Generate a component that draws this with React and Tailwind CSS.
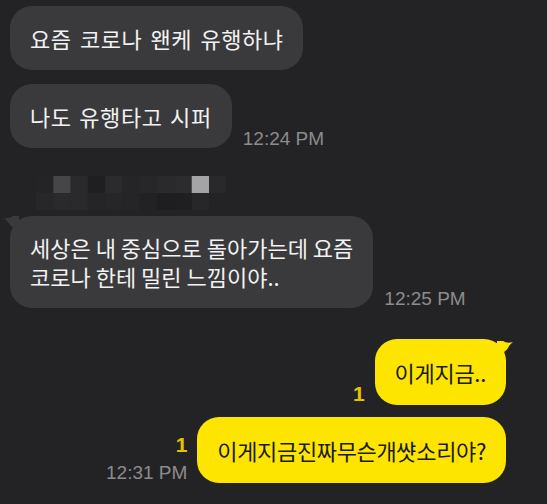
import React from 'react';

const font = { fontFamily: '"Noto Sans CJK KR", "Noto Sans", sans-serif' };

function Time({ children }) {
    return (
        <span className="text-[19px] leading-none text-[#8c8c8e] font-['Liberation_Sans',sans-serif] whitespace-nowrap">
            {children}
        </span>
    );
}

function Received({ children, time, tail, className = '', textClass = 'leading-[28px] py-[18px]' }) {
    return (
        <div className={`flex items-end gap-[11px] pl-[10px] ${className}`}>
            <div className="relative">
                {tail && (
                    <svg className="absolute -left-[7px] top-0" width="16" height="14" viewBox="0 0 16 14">
                        <path d="M0 2 Q6 3 10 0 L16 0 L16 14 Q8 12 5 6 Q3 3 0 2 Z" fill="#3a3a3c" />
                    </svg>
                )}
                <div className={`relative bg-[#3a3a3c] text-[#f2f2f2] text-[22px] rounded-[22px] px-[20px] ${textClass}`}>
                    {children}
                </div>
            </div>
            {time && <div className="-mb-[2px]"><Time>{time}</Time></div>}
        </div>
    );
}

function Sent({ children, time, tail, className = '', textClass = 'tracking-[0px]' }) {
    return (
        <div className={`flex items-end justify-end gap-[10px] pr-[41px] ${className}`}>
            <div className="flex flex-col items-end gap-[8px] pb-[1px]">
                <span className="text-[21px] leading-none font-bold text-[#e6c300] font-['Liberation_Sans',sans-serif]">1</span>
                {time && <Time>{time}</Time>}
            </div>
            <div className="relative">
                {tail && (
                    <svg className="absolute -right-[7px] top-[2px]" width="16" height="14" viewBox="0 0 16 14">
                        <path d="M16 1 Q10 3 6 0 L0 0 L0 14 Q8 12 11 7 Q13 3 16 1 Z" fill="#fde500" />
                    </svg>
                )}
                <div className={`relative bg-[#fde500] text-[#1a1a1a] text-[22px] leading-[28px] rounded-[22px] px-[20px] py-[19px] ${textClass}`}>
                    {children}
                </div>
            </div>
        </div>
    );
}

// blurred sender name, drawn as a strip of mosaic cells
const mosaic = [
    ['#242426', '#464648', '#2a2a2c', '#1f1f21', '#2b2b2d', '#252527', '#272729', '#2a2a2c', '#2c2c2e', '#a4a4a6', '#29292b'],
    ['#27272a', '#2a2a2c', '#2a2a2c', '#252527', '#262628', '#252527', '#222224', '#1e1e20', '#1f1f21', '#272729', '#232325'],
];

function Mosaic() {
    return (
        <svg width="190" height="34" className="ml-[36px]">
            {mosaic.map((row, r) =>
                row.map((c, i) => (
                    <rect key={`${r}-${i}`} x={i * 17.3} y={r * 17} width="17.5" height="17.5" fill={c} />
                ))
            )}
        </svg>
    );
}

export default function App() {
    return (
        <div className="w-[547px] h-[504px] bg-[#232325] overflow-hidden pt-[6px]" style={font}>
            <Received textClass="leading-[28px] py-[18px] tracking-[0.5px] [word-spacing:3px]">요즘 코로나 왠케 유행하냐</Received>
            <Received time="12:24 PM" className="mt-[14px]" textClass="leading-[28px] py-[18px] tracking-[0.6px] [word-spacing:2px]">나도 유행타고 시퍼</Received>
            <div className="mt-[28px]">
                <Mosaic />
            </div>
            <Received time="12:25 PM" tail className="mt-[6px]" textClass="leading-[29px] py-[17px]">
                세상은 내 중심으로 돌아가는데 요즘<br />코로나 한테 밀린 느낌이야..
            </Received>
            <Sent tail className="mt-[31px]" textClass="tracking-[-0.3px]">이게지금..</Sent>
            <Sent time="12:31 PM" className="mt-[12px]" textClass="tracking-[-0.35px]">{'이게지금진짜무슨개\uC343소리야?'}</Sent>
        </div>
    );
}
